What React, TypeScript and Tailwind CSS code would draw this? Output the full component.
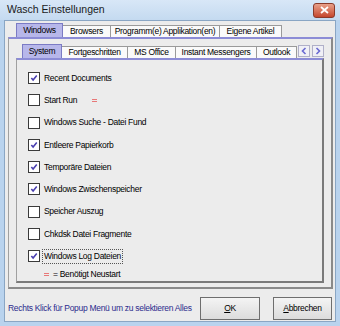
import React, { useState } from 'react';

const outerTabs = [
  { label: 'Windows', w: 'w-[47px]' },
  { label: 'Browsers', w: 'w-[48px]' },
  { label: 'Programm(e) Applikation(en)', w: 'w-[109px]' },
  { label: 'Eigene Artikel', w: 'w-[62px]' },
];
const innerTabs = [
  { label: 'System', w: 'w-[40px]' },
  { label: 'Fortgeschritten', w: 'w-[66px]' },
  { label: 'MS Office', w: 'w-[48px]' },
  { label: 'Instant Messengers', w: 'w-[81px]' },
  { label: 'Outlook', w: 'w-[40px]' },
];

interface IOption {
  label: string;
  checked: boolean;
  restart?: boolean;
  focus?: boolean;
}

const OPTIONS: IOption[] = [
  { label: 'Recent Documents', checked: true },
  { label: 'Start Run', checked: false, restart: true },
  { label: 'Windows Suche - Datei Fund', checked: false },
  { label: 'Entleere Papierkorb', checked: true },
  { label: 'Temporäre Dateien', checked: true },
  { label: 'Windows Zwischenspeicher', checked: true },
  { label: 'Speicher Auszug', checked: false },
  { label: 'Chkdsk Datei Fragmente', checked: false },
  { label: 'Windows Log Dateien', checked: true, focus: true },
];

function RestartMark() {
  return (
    <span className="inline-flex flex-col gap-[1px]">
      <span className="block h-[1px] w-[5px] bg-[#e87878]" />
      <span className="block h-[1px] w-[5px] bg-[#e87878]" />
    </span>
  );
}

function Checkbox({ checked }: { checked: boolean }) {
  return (
    <span className="flex h-[12px] w-[12px] shrink-0 items-center justify-center border border-[#3a3a3a] bg-white">
      {checked && (
        <svg width="8" height="8" viewBox="0 0 9 9">
          <path d="M1.5 4.5 L3.5 6.8 L7.6 1.8" fill="none" stroke="#4a3fb0" strokeWidth="1.8" />
        </svg>
      )}
    </span>
  );
}

function Tab({ label, w, active }: { label: string; w: string; active: boolean }) {
  return (
    <div
      className={
        active
          ? `flex h-[14px] ${w} items-center justify-center overflow-hidden whitespace-nowrap border border-b-0 border-[#7b7bc4] bg-[#b7b7ea]`
          : `flex h-[12px] ${w} items-center justify-center overflow-hidden whitespace-nowrap border border-b-0 border-l-0 border-[#9a9a9a] bg-[#fafafa]`
      }
    >
      {label}
    </div>
  );
}

export default function App() {
  const [options, setOptions] = useState(OPTIONS);

  return (
    <div
      className="flex h-[326px] w-[340px] flex-col bg-[#b9d3ee] text-[8.5px] tracking-[-0.3px] text-black"
      style={{ fontFamily: '"Liberation Sans", Arial, sans-serif' }}
    >
      {/* title bar */}
      <div className="flex h-[20px] items-center justify-between bg-gradient-to-b from-[#d8e7f7] to-[#c4daf0] pl-[7px] pr-[5px]">
        <span className="text-[10.5px] tracking-normal text-[#1a1a1a]">Wasch Einstellungen</span>
        <span className="flex h-[15px] w-[22px] items-center justify-center rounded-[3px] border border-[#8a3a2a] bg-gradient-to-b from-[#e8a08a] to-[#c4452c]">
          <svg width="9" height="8" viewBox="0 0 9 8">
            <path d="M1 1 L8 7 M8 1 L1 7" stroke="white" strokeWidth="1.8" />
          </svg>
        </span>
      </div>

      {/* client */}
      <div className="mx-[4px] mb-[4px] flex flex-1 flex-col border border-[#8aa6c4] bg-[#ececec]">
        <div className="ml-[3px] mr-[2px] mt-[2px] flex flex-col">
          {/* outer tabs */}
          <div className="flex h-[14px] items-end pl-[8px]">
            {outerTabs.map((t, i) => (
              <Tab key={t.label} label={t.label} w={t.w} active={i === 0} />
            ))}
          </div>

          {/* outer panel */}
          <div className="flex h-[252px] flex-col border-t-2 border-r-2 border-b-2 border-l border-t-[#8c8cd6] border-r-[#8a8a8a] border-b-[#8a8a8a] border-l-[#a0a0a0] px-[7px] pb-[6px] pt-[5px]">
            {/* inner tabs */}
            <div className="flex h-[14px] items-end pl-[6px]">
              {innerTabs.map((t, i) => (
                <Tab key={t.label} label={t.label} w={t.w} active={i === 0} />
              ))}
              <div className="mb-[1px] ml-[1px] flex gap-[2px]">
                <span className="flex h-[12px] w-[12px] items-center justify-center border border-[#b0b0c8] bg-[#f0f0f6]">
                  <svg width="6" height="8" viewBox="0 0 6 8">
                    <path d="M4.5 1 L1.5 4 L4.5 7" fill="none" stroke="#6a6ad0" strokeWidth="1.6" />
                  </svg>
                </span>
                <span className="flex h-[12px] w-[12px] items-center justify-center border border-[#b0b0c8] bg-[#f0f0f6]">
                  <svg width="6" height="8" viewBox="0 0 6 8">
                    <path d="M1.5 1 L4.5 4 L1.5 7" fill="none" stroke="#6a6ad0" strokeWidth="1.6" />
                  </svg>
                </span>
              </div>
            </div>

            {/* inner panel */}
            <div className="flex flex-1 flex-col border-t-2 border-r-2 border-b-2 border-l border-t-[#8c8cd6] border-r-[#7a7a7a] border-b-[#7a7a7a] border-l-[#a0a0a0] pl-[11px] pt-[7px]">
              {options.map((o, i) => (
                <label key={o.label} className="flex h-[22.25px] items-center gap-[2px]">
                  <input
                    type="checkbox"
                    className="hidden"
                    checked={o.checked}
                    onChange={() =>
                      setOptions(options.map((x, j) => (j === i ? { ...x, checked: !x.checked } : x)))
                    }
                  />
                  <Checkbox checked={o.checked} />
                  <span className={o.focus ? 'border border-dotted border-[#555] px-[1px]' : 'border border-transparent px-[1px]'}>
                    {o.label}
                  </span>
                  {o.restart && (
                    <span className="ml-[11px] flex">
                      <RestartMark />
                    </span>
                  )}
                </label>
              ))}
              <div className="flex h-[14px] items-center gap-[4px] pl-[16px]">
                <RestartMark />
                <span>= Benötigt Neustart</span>
              </div>
            </div>
          </div>
        </div>

        {/* footer */}
        <div className="flex flex-1 items-center pl-[3px] pr-[3px] pt-[6px]">
          <span className="flex-1 whitespace-nowrap text-[#2b2b8c]">Rechts Klick für Popup Menü um zu selektieren Alles</span>
          <button className="mr-[13px] h-[23px] w-[60px] border border-[#6e6e6e] bg-gradient-to-b from-[#f4f4f4] to-[#dcdcdc]">
            <span className="underline">O</span>K
          </button>
          <button className="h-[23px] w-[59px] border border-[#6e6e6e] bg-gradient-to-b from-[#f4f4f4] to-[#dcdcdc]">
            <span className="underline">A</span>bbrechen
          </button>
        </div>
      </div>
    </div>
  );
}
